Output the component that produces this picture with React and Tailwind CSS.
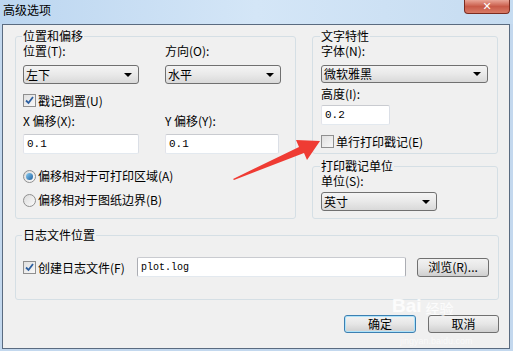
import { useState } from "react";

const cjk = { fontFamily: '"Noto Sans CJK SC", "Noto Sans", sans-serif' };
const mono = { fontFamily: '"Liberation Mono", "DejaVu Sans Mono", monospace' };

const Group = ({ title, className, children }) => (
  <fieldset className={`border border-[#d5dfe5] rounded-[3px] ${className}`}>
    <legend className="-ml-[1px] px-[1px] text-[12px] leading-[12px] text-black">
      {title}
    </legend>
    {children}
  </fieldset>
);

const Combo = ({ value, className }) => (
  <div
    className={`flex items-center justify-between border border-[#707070] rounded-[3px] bg-gradient-to-b from-[#f4f4f4] via-[#e9e9e9] to-[#d9d9d9] pl-[2px] pr-[6px] text-[12px] leading-[14px] ${className}`}
  >
    <span>{value}</span>
    <span className="w-0 h-0 border-l-[4px] border-r-[4px] border-t-[4px] border-l-transparent border-r-transparent border-t-black" />
  </div>
);

const TextBox = ({ value, className }) => (
  <div
    className={`flex items-center bg-white border border-[#abadb3] border-t-[#c9cbd0] border-b-[#e3e9ef] border-l-[#e2e3ea] border-r-[#dbdfe6] rounded-[2px] pl-[3px] text-[11px] ${className}`}
    style={mono}
  >
    {value}
  </div>
);

const Check = ({ checked, label }) => (
  <label className="flex items-center gap-[2px] text-[12px] leading-[13px]">
    <span className="w-[13px] h-[13px] border border-[#8f8f8f] bg-gradient-to-br from-[#e0e0e0] to-[#f8f8f8] flex items-center justify-center">
      {checked && (
        <svg width="9" height="9" viewBox="0 0 9 9">
          <path d="M1 4.5 L3.5 7 L8 1" stroke="#2c5fa0" strokeWidth="1.8" fill="none" />
        </svg>
      )}
    </span>
    <span>{label}</span>
  </label>
);

const Radio = ({ checked, label }) => (
  <label className="flex items-center gap-[2px] text-[12px] leading-[14px]">
    <span className="w-[13px] h-[13px] rounded-full border border-[#8f8f8f] bg-gradient-to-br from-[#dcdcdc] to-[#fbfbfb] flex items-center justify-center">
      {checked && (
        <span className="w-[7px] h-[7px] rounded-full bg-gradient-to-br from-[#8cd0f5] to-[#1b5f9e]" />
      )}
    </span>
    <span>{label}</span>
  </label>
);

const Button = ({ label, primary, className }) => (
  <button
    className={`flex items-center justify-center rounded-[3px] border ${
      primary ? "border-[#3c7fb1] shadow-[0_0_0_1px_#aee3fa_inset]" : "border-[#707070]"
    } bg-gradient-to-b from-[#f2f2f2] via-[#e6e6e6] to-[#cfcfcf] text-[12px] leading-[14px] text-black ${className}`}
  >
    {label}
  </button>
);

export default function App() {
  const [logName] = useState("plot.log");

  return (
    <div
      className="relative w-[513px] h-[351px] overflow-hidden bg-[#c3d8ee] text-black"
      style={cjk}
    >
      {/* title bar */}
      <div className="h-[24px] flex items-start justify-between bg-gradient-to-r from-[#bcd6f0] via-[#d4e6f7] to-[#c6dcf1]">
        <span className="ml-[3px] mt-[3px] text-[12px] leading-[14px]">高级选项</span>
        <div className="mr-[3px] w-[46px] h-[14px] rounded-b-[4px] border border-t-0 border-[#7b2c20] bg-gradient-to-b from-[#e9a597] via-[#c85a48] to-[#d87a66] flex items-center justify-center">
          <span className="text-white text-[11px] font-bold leading-none" style={{ fontFamily: '"DejaVu Sans", sans-serif' }}>
            ✕
          </span>
        </div>
      </div>

      {/* window body */}
      <div className="ml-[2px] w-[508px] h-[325px] border border-[#5a6b80] bg-[#f0f0f0] pl-[12px] pr-[10px] pt-[5px]">
        <div className="flex gap-[16px]">
          <Group title="位置和偏移" className="w-[281px] h-[189px] pl-[7px]">
            <div className="grid grid-cols-[142px_1fr] mt-[2px]">
              <span className="text-[12px] leading-[14px]">位置(T):</span>
              <span className="text-[12px] leading-[14px]">方向(O):</span>
              <Combo value="左下" className="mt-[7px] w-[116px] h-[19px]" />
              <Combo value="水平" className="mt-[7px] w-[116px] h-[19px]" />
            </div>
            <div className="mt-[10px]">
              <Check checked label="戳记倒置(U)" />
            </div>
            <div className="grid grid-cols-[142px_1fr] mt-[7px]">
              <span className="text-[12px] leading-[14px]">X 偏移(X):</span>
              <span className="text-[12px] leading-[14px]">Y 偏移(Y):</span>
              <TextBox value="0.1" className="mt-[6px] w-[116px] h-[20px]" />
              <TextBox value="0.1" className="mt-[6px] w-[114px] h-[20px]" />
            </div>
            <div className="mt-[15px] flex flex-col gap-[10px]">
              <Radio checked label="偏移相对于可打印区域(A)" />
              <Radio label="偏移相对于图纸边界(B)" />
            </div>
          </Group>

          <div className="w-[186px] flex flex-col gap-[6px]">
            <Group title="文字特性" className="h-[124px] pl-[8px]">
              <div className="mt-[2px] text-[12px] leading-[14px]">字体(N):</div>
              <Combo value="微软雅黑" className="mt-[7px] w-[167px] h-[18px]" />
              <div className="mt-[4px] text-[12px] leading-[14px]">高度(I):</div>
              <TextBox value="0.2" className="mt-[4px] w-[69px] h-[20px]" />
              <div className="mt-[10px]">
                <Check label="单行打印戳记(E)" />
              </div>
            </Group>
            <Group title="打印戳记单位" className="h-[59px] pl-[8px]">
              <div className="mt-[2px] text-[12px] leading-[14px]">单位(S):</div>
              <Combo value="英寸" className="mt-[4px] w-[116px] h-[19px]" />
            </Group>
          </div>
        </div>

        <Group title="日志文件位置" className="mt-[10px] h-[71px] pl-[7px]">
          <div className="mt-[16px] flex items-center">
            <div className="w-[114px]">
              <Check checked label="创建日志文件(F)" />
            </div>
            <div
              className="w-[269px] h-[20px] bg-white border border-[#abadb3] border-t-[#c9cbd0] border-b-[#e3e9ef] rounded-[2px] pl-[3px] flex items-center text-[10px]"
              style={mono}
            >
              {logName}
            </div>
            <Button label="浏览(R)..." className="ml-[11px] w-[72px] h-[19px]" />
          </div>
        </Group>

        <div className="mt-[15px] flex justify-end gap-[12px]">
          <Button primary label="确定" className="w-[72px] h-[18px]" />
          <Button label="取消" className="w-[71px] h-[18px]" />
        </div>
      </div>

      {/* red annotation arrow */}
      <svg className="absolute left-0 top-0 pointer-events-none" width="513" height="351">
        <polygon
          points="233,179 299,147 296,140 320,141 307,160 304,153 234,180"
          fill="#ef3b33"
        />
      </svg>

      {/* faint watermark */}
      <div className="absolute left-[392px] top-[296px] pointer-events-none text-white/80 leading-none">
        <div className="flex items-end gap-[4px]">
          <span className="text-[19px] font-bold" style={{ fontFamily: '"Liberation Sans", sans-serif' }}>Bai</span>
          <span className="text-[14px]">经验</span>
        </div>
      </div>
      <div
        className="absolute left-[400px] top-[337px] pointer-events-none text-white/60 text-[9px] leading-none"
        style={{ fontFamily: '"Liberation Sans", sans-serif' }}
      >
        jingyan.baidu.com
      </div>
    </div>
  );
}
